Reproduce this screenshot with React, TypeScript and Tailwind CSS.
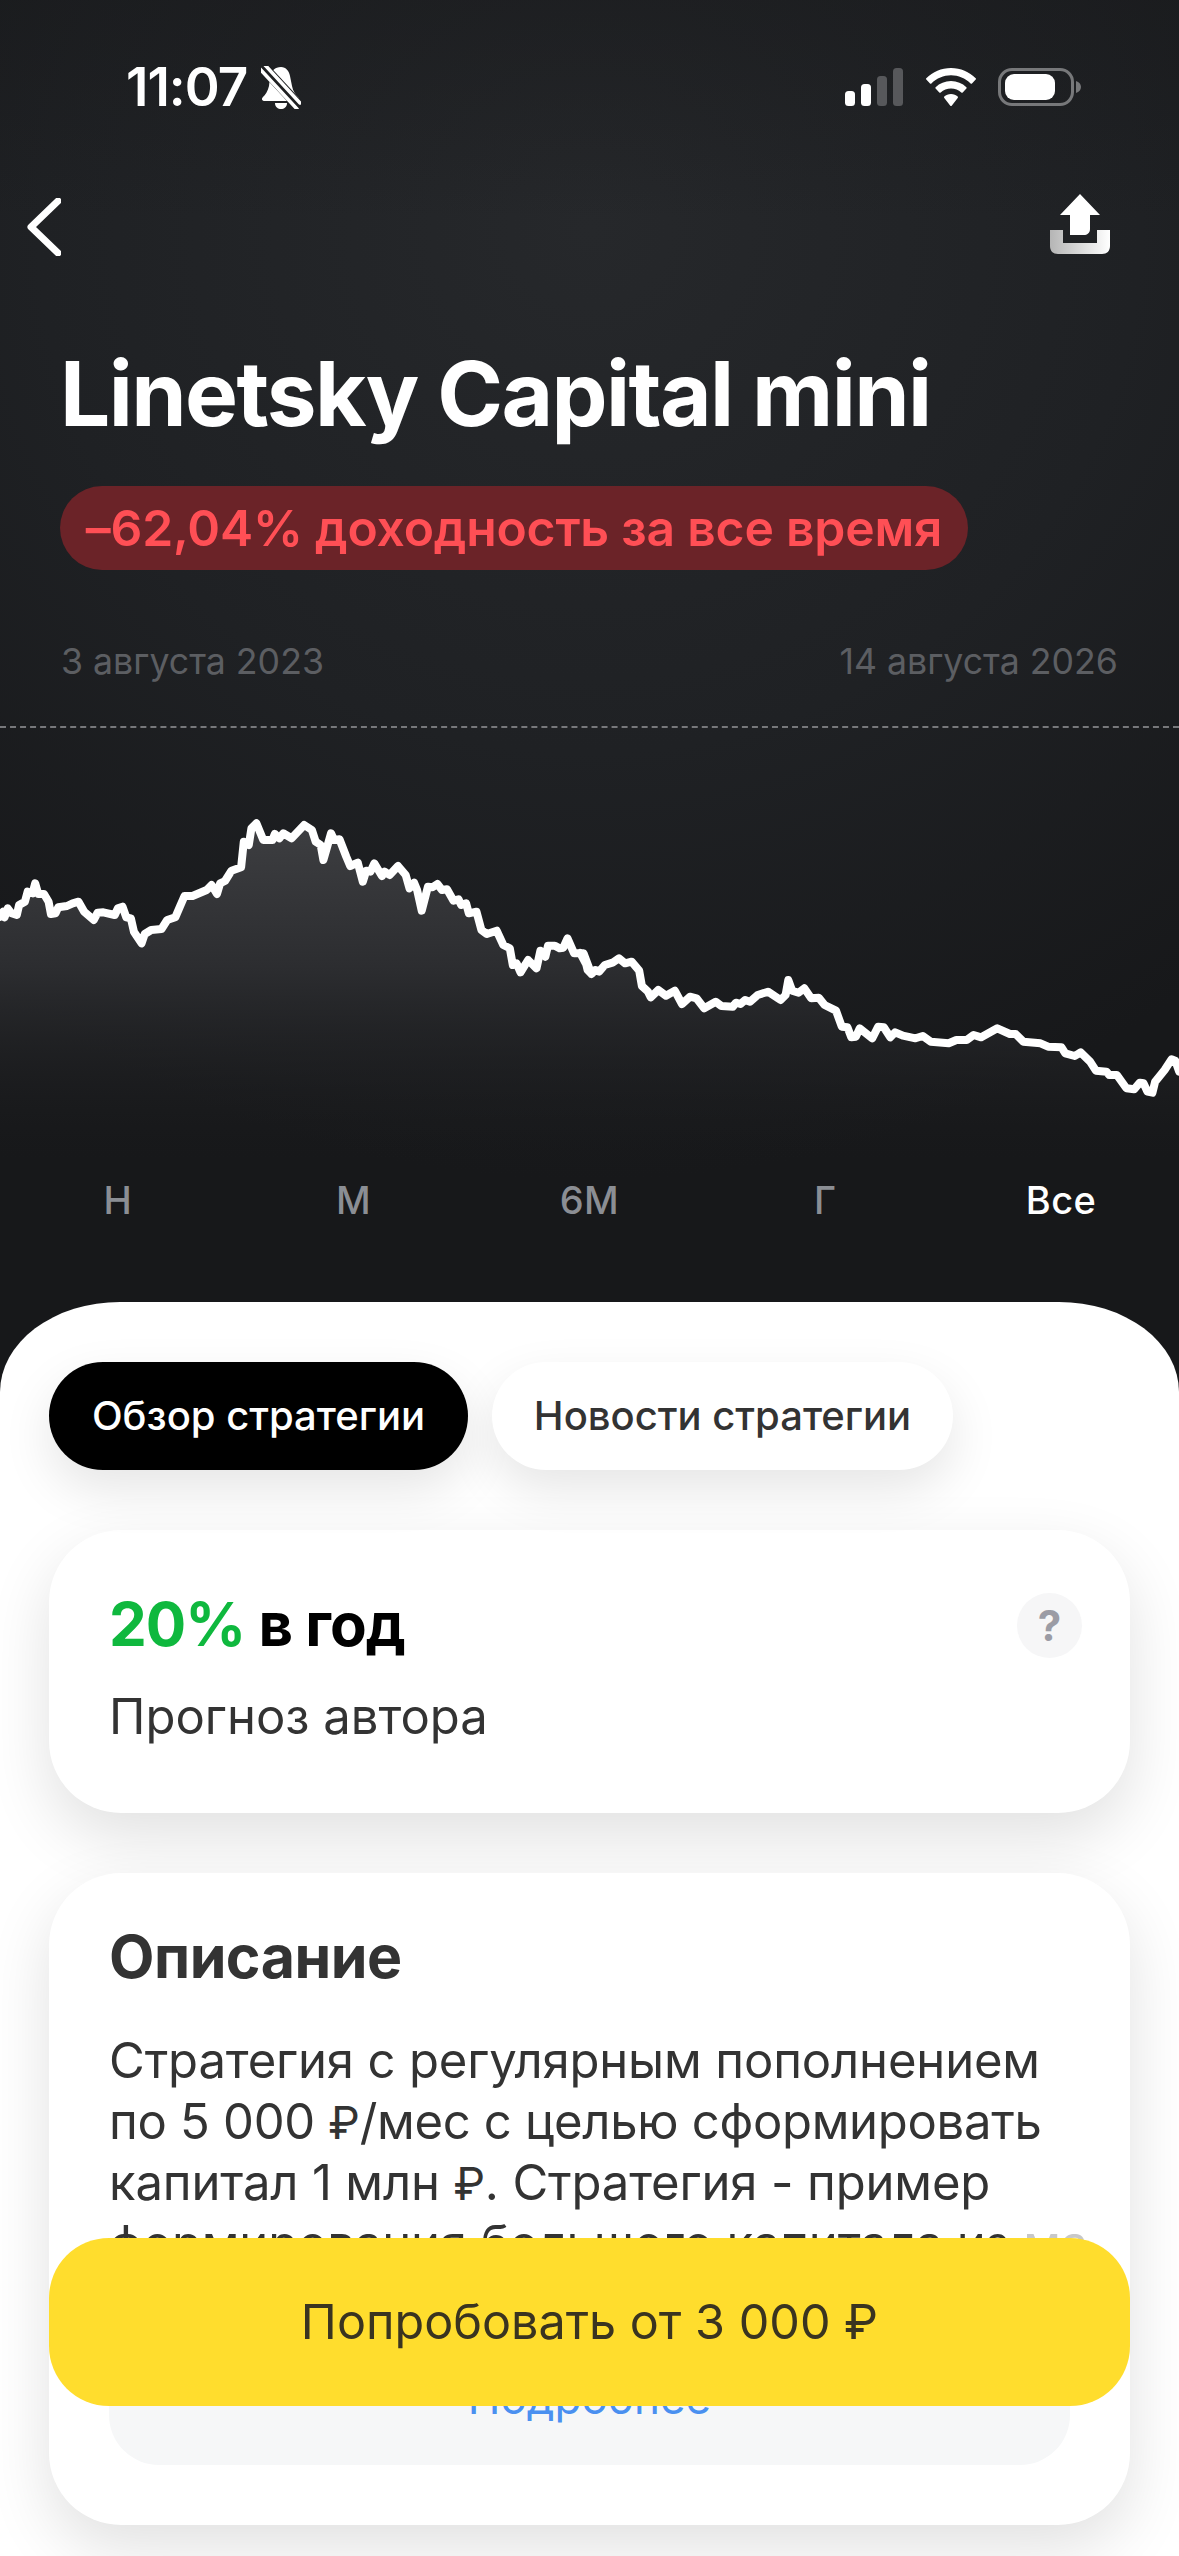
import React from "react";

// chart points read off the reference, x/y in page pixels once scaled below
const leftRaw: [number, number][] = [
  [0,410],[8,395],[12,412],[20,385],[30,400],[44,405],[50,375],[65,365],[72,335],[85,340],[92,310],[100,342],[115,342],[127,365],[133,402],[145,400],[152,382],[175,378],[190,370],[205,365],[220,395],[245,420],[255,398],[270,397],[300,405],[308,385],[320,380],[330,412],[342,415],[350,455],[370,490],[378,462],[395,450],[422,447],[437,420],[458,412],[470,380],[482,348],[503,348],[540,330],[553,315],[567,342],[575,310],[588,303],[605,272],[630,262],[637,185],[650,195],[657,145],[670,130],[688,180],[712,180],[718,162],[730,175],[740,160],[762,175],[795,135],[815,150],[825,185],[838,195],[845,240],[865,160],[873,180],[887,178],[905,230],[915,258],[935,248],[948,305],[957,272],[968,275],[978,250],[998,288],[1005,275],[1018,285],[1040,258],[1060,285],[1070,325],[1082,308],[1090,330],[1102,392],[1118,320],[1130,322],[1143,312],[1155,330],[1168,328],[1185,362],[1198,358],[1205,375],[1218,370],[1225,400],[1245,395],[1258,450],[1272,462],[1298,452],[1315,495],[1332,505],[1340,555],[1350,550],[1360,577],[1380,540],[1402,565],[1412,512],[1425,530],[1432,497],[1450,497],[1462,505],[1472,503],[1483,475],[1500,520],[1525,520],[1545,582],
];
const rightRaw: [number, number][] = [
  [0,518],[10,522],[20,570],[30,582],[40,570],[50,575],[65,555],[85,548],[102,535],[118,550],[135,545],[155,572],[162,618],[178,635],[185,652],[205,630],[225,647],[248,632],[267,672],[288,650],[305,655],[325,685],[355,665],[370,678],[400,680],[408,668],[420,672],[432,660],[445,665],[465,645],[492,635],[525,660],[538,645],[545,600],[555,632],[572,638],[587,625],[605,655],[625,653],[640,675],[670,692],[685,740],[700,742],[710,772],[722,770],[732,745],[765,775],[780,740],[795,742],[812,772],[825,757],[845,767],[878,775],[897,768],[918,785],[965,790],[985,780],[1012,780],[1030,765],[1050,772],[1092,745],[1125,762],[1140,762],[1160,785],[1205,790],[1225,800],[1260,802],[1270,820],[1295,828],[1310,817],[1335,845],[1350,872],[1378,875],[1385,885],[1405,885],[1430,925],[1450,928],[1465,908],[1475,910],[1485,935],[1498,938],[1505,905],[1530,870],[1548,838],[1558,842],[1568,875],
];

const CHART_TOP = 740;
const chartPoints = [
  ...leftRaw.map(([x, y]) => [x / 2.613, 780 + y / 3 - CHART_TOP]),
  ...rightRaw.map(([x, y]) => [580 + x / 2.617, 780 + y / 3 - CHART_TOP]),
];
const linePath = chartPoints.map(([x, y], i) => `${i ? "L" : "M"}${x.toFixed(1)} ${y.toFixed(1)}`).join(" ");
const areaPath = `${linePath} L1179 430 L0 430 Z`;

const periods = ["Н", "М", "6М", "Г", "Все"];

const StatusBar = () => (
  <div className="flex h-[56px] items-center justify-between pl-[126px] pr-[98px]">
    <div className="flex items-center gap-[14px]">
      <span className="text-[53px] font-semibold leading-none tracking-[-1px] text-white">11:07</span>
      <svg width="40" height="43" viewBox="0 0 40 43" fill="none">
        <path d="M20 1c5 0 8 4 9 9l2 10c1 5 3 8 6 11 2 2 1 4-1 4H4c-3 0-4-2-2-4 2-2 5-6 6-11l1-9c1-6 5-10 11-10z" fill="#fff" />
        <path d="M14 37h12c0 4-3 6-6 6s-6-2-6-6z" fill="#fff" />
        <path d="M1 0l38 41" stroke="#1f2022" strokeWidth="11" />
        <path d="M-1 3l37 40M4 -1l35 38" stroke="#fff" strokeWidth="3.5" strokeLinecap="round" />
      </svg>
    </div>
    <div className="flex items-center">
      <svg width="58" height="38" viewBox="0 0 58 38">
        <rect x="0" y="23" width="10" height="15" rx="3.5" fill="#fff" />
        <rect x="16" y="16" width="10" height="22" rx="3.5" fill="#fff" />
        <rect x="32" y="8" width="10" height="30" rx="3.5" fill="#57585b" />
        <rect x="48" y="0" width="10" height="38" rx="3.5" fill="#57585b" />
      </svg>
      <svg className="ml-[23px]" width="50" height="38" viewBox="0 0 50 38" fill="#fff">
        <path d="M25 0c9.700 0 18.200 3.800 24.700 10.200.400.400.400 1 0 1.400l-3.700 3.800c-.400.400-1 .400-1.400 0C39.300 10.300 32.500 7.300 25 7.300S10.700 10.300 5.400 15.400c-.400.400-1 .400-1.400 0L.300 11.600c-.400-.400-.400-1 0-1.400C6.800 3.800 15.300 0 25 0z" />
        <path d="M25 13c6 0 11.300 2.300 15.400 6.200.400.400.400 1 0 1.400l-3.700 3.800c-.400.400-1 .400-1.400 0-2.800-2.500-6.300-4-10.300-4s-7.500 1.500-10.300 4c-.400.400-1 .400-1.400 0l-3.700-3.800c-.400-.400-.400-1 0-1.400C13.700 15.300 19 13 25 13z" />
        <path d="M25 26c2.700 0 5 1 6.700 2.600.400.400.400 1 0 1.400l-6 7.700c-.400.400-1 .400-1.400 0l-6-7.700c-.400-.400-.400-1 0-1.400C20 27 22.300 26 25 26z" />
      </svg>
      <div className="ml-[22px] flex items-center">
        <div className="flex h-[38px] w-[76px] items-center rounded-[14px] border-[3px] border-[#77787a] pl-[4px]">
          <div className="h-[26px] w-[50px] rounded-[9px] bg-white" />
        </div>
        <svg className="ml-[2px]" width="5" height="12" viewBox="0 0 5 12">
          <path d="M0 0c3 1 5 3 5 6s-2 5-5 6z" fill="#77787a" />
        </svg>
      </div>
    </div>
  </div>
);

const NavBar = () => (
  <div className="mt-[78px] flex h-[62px] items-center justify-between pl-[27px] pr-[69px]">
    <svg className="mt-[6px]" width="34" height="58" viewBox="0 0 34 58" fill="none">
      <path d="M31 3L4 29l27 26" stroke="#fff" strokeWidth="7" strokeLinecap="round" strokeLinejoin="round" />
    </svg>
    <svg width="60" height="60" viewBox="0 0 60 60">
      <defs>
        <linearGradient id="tray" x1="0" x2="1" y1="0" y2="0">
          <stop offset="0" stopColor="#b5b5b5" />
          <stop offset="1" stopColor="#ffffff" />
        </linearGradient>
      </defs>
      <path d="M30 0L50 21H40v14c0 4-3 6-6 6H20V21H10z" fill="#fff" />
      <path d="M0 36h13v13h34V36h13v16c0 5-3 8-8 8H8c-5 0-8-3-8-8z" fill="url(#tray)" />
    </svg>
  </div>
);

const Chart = () => (
  <svg className="mt-[12px] block" width="1179" height="430" viewBox="0 0 1179 430" fill="none">
    <defs>
      <linearGradient id="area" gradientUnits="userSpaceOnUse" x1="0" x2="0" y1="70" y2="420">
        <stop offset="0" stopColor="#3f4043" />
        <stop offset="0.45" stopColor="#2c2d30" />
        <stop offset="1" stopColor="#1a1b1d" stopOpacity="0" />
      </linearGradient>
    </defs>
    <path d={areaPath} fill="url(#area)" />
    <path d={linePath} stroke="#fff" strokeWidth="8" strokeLinejoin="round" strokeLinecap="round" />
  </svg>
);

export default function App() {
  return (
    <div className="relative flex h-[2556px] w-[1179px] flex-col overflow-hidden bg-[#17181a] [font-family:Inter,sans-serif]">
      <div className="h-[1400px] shrink-0 bg-[linear-gradient(to_bottom,rgba(23,24,26,0.45),rgba(23,24,26,0)_220px),radial-gradient(ellipse_1000px_950px_at_50%_230px,#26282b_0%,#1f2124_55%,#17181a_100%)] pt-[59px]">
        <StatusBar />
        <NavBar />

        <h1 className="ml-[60px] mt-[89px] text-[89px] font-bold leading-[100px] tracking-[-1.6px] text-white">
          Linetsky Capital mini
        </h1>

        <div className="ml-[60px] mt-[42px] flex h-[84px] w-[908px] items-center justify-center rounded-full bg-[#6b2328] text-[49.8px] font-semibold tracking-[-0.2px] text-[#ff4f55]">
          –62,04% доходность за все время
        </div>

        <div className="mt-[69px] flex h-[46px] items-center justify-between px-[61px] text-[35.7px] text-[#5c5e62]">
          <span>3 августа 2023</span>
          <span>14 августа 2026</span>
        </div>

        <div className="mt-[41px] h-0 border-t-2 border-dashed border-[#77787b]" />

        <Chart />

        <div className="mt-[8px] grid grid-cols-5 text-center text-[38px] font-medium leading-[44px] tracking-[0.5px] text-[#8b8e94]">
          {periods.map((p) => (
            <span key={p} className={p === "Все" ? "text-white" : ""}>
              {p}
            </span>
          ))}
        </div>
      </div>

      <div className="absolute inset-x-0 top-[1302px] h-[1254px] rounded-tl-[120px_90px] rounded-tr-[120px_90px] bg-white px-[49px] pt-[60px]">
        <div className="flex gap-[24px]">
          <button className="h-[108px] w-[419px] rounded-full bg-black text-[40px] font-medium text-white shadow-[0_20px_50px_rgba(0,0,0,0.1)]">
            Обзор стратегии
          </button>
          <button className="h-[108px] w-[461px] rounded-full bg-white text-[40px] font-medium text-[#333333] shadow-[0_20px_50px_rgba(0,0,0,0.1)]">
            Новости стратегии
          </button>
        </div>

        <div className="mt-[60px] flex h-[283px] items-start justify-between rounded-[72px] bg-white pl-[60px] pr-[48px] pt-[58px] shadow-[0_24px_64px_rgba(0,0,0,0.12)]">
          <div>
            <div className="text-[60px] font-bold leading-[72px] tracking-[-1px] text-black">
              <span className="text-[#0fb83e]">20%</span> в год
            </div>
            <div className="mt-[28px] text-[49px] leading-[58px] text-[#333333]">Прогноз автора</div>
          </div>
          <div className="mt-[5px] flex h-[65px] w-[65px] items-center justify-center rounded-full bg-[#f6f6f7] text-[42px] font-bold text-[#9b9ca5]">
            ?
          </div>
        </div>

        <div className="relative mt-[60px] h-[652px] overflow-hidden rounded-[72px] bg-white px-[60px] pt-[50px] shadow-[0_24px_64px_rgba(0,0,0,0.12)]">
          <h2 className="text-[59px] font-bold leading-[68px] tracking-[-0.5px] text-[#333333]">Описание</h2>
          <div className="mt-[39px] whitespace-nowrap text-[49px] leading-[61px] tracking-[-0.15px] text-[#333333]">
            <div className="h-[61px]">Стратегия с регулярным пополнением</div>
            <div className="h-[61px] tracking-[-0.3px]">
              по 5 000 <span className="text-[45px] leading-none">₽</span>/мес с целью сформировать
            </div>
            <div className="h-[61px]">
              капитал 1 млн <span className="text-[45px] leading-none">₽</span>. Стратегия - пример
            </div>
            <div className="h-[61px]">
              формирования большого капитала из <span className="text-[#c8c8c8]">ма</span>
            </div>
          </div>
          <div className="mt-[44px] h-[147px] rounded-[50px] bg-[#f6f7f8] pt-[52px] text-center text-[44px] leading-[56px] text-[#4a90f0]">
            Подробнее
          </div>
        </div>
      </div>

      <button className="absolute left-[49px] top-[2238px] h-[168px] w-[1081px] rounded-[60px] bg-[#ffdd2d] text-[48.5px] text-[#3a3420]">
        Попробовать от 3 000 ₽
      </button>
    </div>
  );
}
